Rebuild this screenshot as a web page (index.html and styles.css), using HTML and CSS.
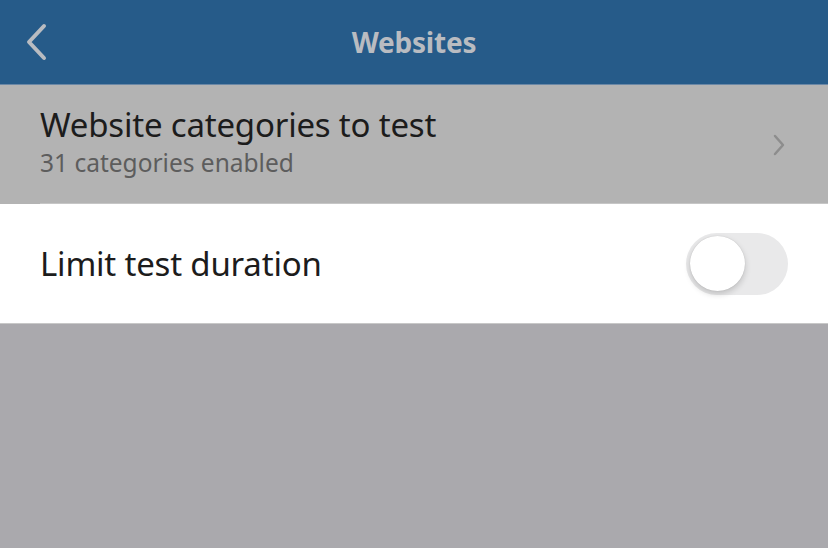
FILE: index.html
```html
<!DOCTYPE html>
<html lang="en">
<head>
  <meta charset="UTF-8" />
  <meta name="viewport" content="width=device-width, initial-scale=1" />
  <title>Websites</title>
  <link rel="stylesheet" href="styles.css">
</head>
<body>
<header class="navbar">
  <button class="back" aria-label="Back">
    <svg width="24" height="38" viewBox="0 0 24 38">
      <path d="M20 3 L5 19 L20 35" fill="none" stroke="#b9bcc1" stroke-width="4" stroke-linecap="round" stroke-linejoin="round"/>
    </svg>
  </button>
  <h1>Websites</h1>
</header>
<main>
  <div class="row row-link">
    <div class="row-text">
      <div class="row-title">Website categories to test</div>
      <div class="row-sub">31 categories enabled</div>
    </div>
    <svg class="chevron" width="14" height="22" viewBox="0 0 14 22">
      <path d="M3 2 L11 11 L3 20" fill="none" stroke="#8d8d8d" stroke-width="2.5" stroke-linecap="round" stroke-linejoin="round"/>
    </svg>
  </div>
  <div class="row row-toggle">
    <div class="row-title">Limit test duration</div>
    <span class="switch"><span class="knob"></span></span>
  </div>
</main>
</body>
</html>
```

FILE: styles.css
```css
html,
body {
  margin: 0;
  height: 100%;
}
body {
  font-family: "Noto Sans", "Open Sans", sans-serif;
  background-color: #aaa9ad;
}

.navbar {
  height: 84px;
  background-color: #265b89;
  border-bottom: 1px solid #6b88a6;
  display: flex;
  align-items: center;
  justify-content: center;
  position: relative;
}
.navbar h1 {
  margin: 0;
  font-size: 28px;
  font-weight: bold;
  color: #b9bcc1;
  letter-spacing: -0.2px;
}
.back {
  position: absolute;
  left: 24px;
  top: 23px;
  background: none;
  border: 0;
  padding: 0;
  display: flex;
}

.row {
  display: flex;
  align-items: center;
  padding: 0 40px;
}
.row-title {
  font-size: 33px;
  color: #1c1c1c;
  letter-spacing: -0.2px;
}
.row-link {
  height: 119px;
  background-color: #b3b3b3;
  justify-content: space-between;
  position: relative;
}
.row-link::after {
  content: "";
  position: absolute;
  left: 40px;
  right: 0;
  bottom: 0;
  height: 1px;
  background-color: #c6c6c6;
}
.row-link .row-title {
  line-height: 40px;
  margin-top: -6px;
}
.row-sub {
  font-size: 24.5px;
  color: #5d5d5d;
  line-height: 32px;
  margin-top: 2px;
}
.chevron {
  margin-right: 2px;
}

.row-toggle {
  height: 119px;
  background-color: #ffffff;
  justify-content: space-between;
  border-bottom: 1px solid #c8c8c8;
}
.switch {
  width: 102px;
  height: 62px;
  border-radius: 31px;
  background-color: #e9e9ea;
  display: flex;
  align-items: center;
  padding-left: 4px;
  box-sizing: border-box;
}
.knob {
  width: 55px;
  height: 55px;
  border-radius: 50%;
  background-color: #ffffff;
  box-shadow: 0 3px 6px rgba(0, 0, 0, 0.18), 0 0 1px rgba(0, 0, 0, 0.2);
}
```
